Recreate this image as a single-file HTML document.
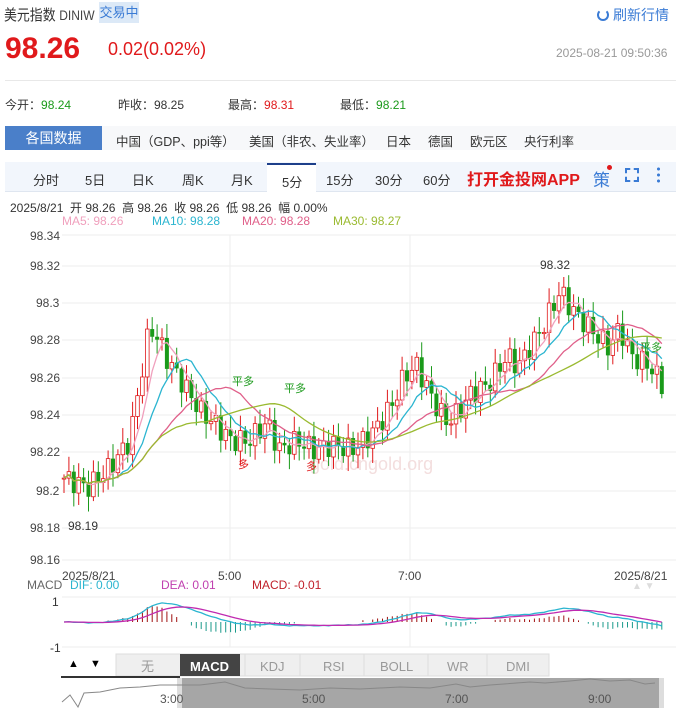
<!DOCTYPE html>
<html><head><meta charset="utf-8">
<style>
*{margin:0;padding:0;box-sizing:border-box}
body{width:676px;height:708px;overflow:hidden;background:#fff;font-family:"Liberation Sans","Noto Sans CJK SC",sans-serif;color:#333;position:relative}
.a{position:absolute;white-space:nowrap}
.g{color:#1a9a1a}.r{color:#e0191b}
</style></head><body>
<div class="a" style="left:4px;top:4px;font-size:15px;color:#333;transform:scaleX(0.86);transform-origin:0 0">美元指数 <span style="font-size:14px;color:#444">DINIW</span></div>
<div class="a" style="left:99px;top:2px;width:40px;height:21px;background:#dce9f7;color:#3a7bd5;font-size:13px;line-height:21px;text-align:center">交易中</div>
<div class="a" style="left:597px;top:5px;font-size:14px;color:#3a7bd5"><span style="display:inline-block;width:12px;height:12px;border:2.5px solid #3a7bd5;border-radius:50%;border-top-color:transparent;vertical-align:-1px;margin-right:4px"></span>刷新行情</div>
<div class="a r" style="left:5px;top:32px;font-size:30px;font-weight:bold">98.26</div>
<div class="a r" style="left:108px;top:39px;font-size:18px">0.02(0.02%)</div>
<div class="a" style="left:556px;top:46px;font-size:12px;color:#999">2025-08-21 09:50:36</div>
<div class="a" style="left:5px;top:80px;width:671px;height:1px;background:#e8e8e8"></div>
<div class="a" style="left:5px;top:96px;font-size:12px">今开：<span class="g">98.24</span></div>
<div class="a" style="left:118px;top:96px;font-size:12px">昨收：98.25</div>
<div class="a" style="left:228px;top:96px;font-size:12px">最高：<span class="r">98.31</span></div>
<div class="a" style="left:340px;top:96px;font-size:12px">最低：<span class="g">98.21</span></div>
<div class="a" style="left:5px;top:126px;width:97px;height:24px;background:#4a7fc9;color:#fff;font-size:14px;line-height:24px;text-align:center">各国数据</div>
<div class="a" style="left:102px;top:126px;width:574px;height:24px;background:#f7f8fa"></div>
<div class="a" style="left:116px;top:131px;font-size:12.5px;color:#333">中国（GDP、ppi等）</div>
<div class="a" style="left:249px;top:131px;font-size:12.5px">美国（非农、失业率）</div>
<div class="a" style="left:386px;top:131px;font-size:12.5px">日本</div>
<div class="a" style="left:428px;top:131px;font-size:12.5px">德国</div>
<div class="a" style="left:470px;top:131px;font-size:12.5px">欧元区</div>
<div class="a" style="left:524px;top:131px;font-size:12.5px">央行利率</div>
<div class="a" style="left:5px;top:162px;width:671px;height:30px;background:#f2f6fc;border-bottom:1px solid #dfe6f0"></div>
<div class="a" style="left:267px;top:163px;width:49px;height:30px;background:#fff;border-top:2px solid #1d3f8a"></div>
<div class="a" style="left:33px;top:170px;font-size:13px">分时</div>
<div class="a" style="left:85px;top:170px;font-size:13px">5日</div>
<div class="a" style="left:132px;top:170px;font-size:13px">日K</div>
<div class="a" style="left:182px;top:170px;font-size:13px">周K</div>
<div class="a" style="left:231px;top:170px;font-size:13px">月K</div>
<div class="a" style="left:282px;top:172px;font-size:13px">5分</div>
<div class="a" style="left:326px;top:170px;font-size:13px">15分</div>
<div class="a" style="left:375px;top:170px;font-size:13px">30分</div>
<div class="a" style="left:423px;top:170px;font-size:13px">60分</div>
<div class="a r" style="left:467px;top:166px;font-size:16px;font-weight:bold">打开金投网APP</div>
<div class="a" style="left:593px;top:166px;font-size:17px;color:#3a7bd5">策</div>
<div class="a" style="left:607px;top:165px;width:5px;height:5px;border-radius:50%;background:#e0191b"></div>
<div class="a" style="left:625px;top:168px;width:14px;height:14px;border:2px dashed #3a7bd5;border-width:2px"></div>
<div class="a" style="left:657px;top:166px;width:3px;height:17px;background:radial-gradient(circle,#3a7bd5 1.4px,transparent 1.6px) 0 0/3px 6px"></div>
<div class="a" style="left:10px;top:199px;font-size:12px;color:#333">2025/8/21&nbsp; 开 98.26&nbsp; 高 98.26&nbsp; 收 98.26&nbsp; 低 98.26&nbsp; 幅 0.00%</div>
<div class="a" style="left:62px;top:214px;font-size:12px;color:#f0a0bd">MA5: 98.26</div>
<div class="a" style="left:152px;top:214px;font-size:12px;color:#2bb5d0">MA10: 98.28</div>
<div class="a" style="left:242px;top:214px;font-size:12px;color:#e0608a">MA20: 98.28</div>
<div class="a" style="left:333px;top:214px;font-size:12px;color:#9aba30">MA30: 98.27</div>
<svg class="a" style="left:0;top:225px" width="676" height="483" id="sv" font-family="Liberation Sans,sans-serif" font-size="12">
<g fill="#444">
<text x="30" y="15">98.34</text><text x="30" y="45">98.32</text><text x="36" y="82">98.3</text>
<text x="30" y="119">98.28</text><text x="30" y="157">98.26</text><text x="30" y="194">98.24</text>
<text x="30" y="231">98.22</text><text x="36" y="270">98.2</text><text x="30" y="307">98.18</text><text x="30" y="339">98.16</text>
<text x="62" y="355">2025/8/21</text><text x="218" y="355">5:00</text><text x="398" y="355">7:00</text><text x="614" y="355">2025/8/21</text>
</g>
<g stroke="#eee"><line x1="62" y1="10" x2="676" y2="10"/><line x1="62" y1="41" x2="676" y2="41"/><line x1="62" y1="78" x2="676" y2="78"/><line x1="62" y1="115" x2="676" y2="115"/><line x1="62" y1="153" x2="676" y2="153"/><line x1="62" y1="190" x2="676" y2="190"/><line x1="62" y1="227" x2="676" y2="227"/><line x1="62" y1="266" x2="676" y2="266"/><line x1="62" y1="303" x2="676" y2="303"/><line x1="62" y1="335" x2="676" y2="335"/><line x1="230" y1="10" x2="230" y2="335"/><line x1="410" y1="10" x2="410" y2="335"/><line x1="62" y1="372" x2="676" y2="372"/><line x1="62" y1="422" x2="676" y2="422"/><line x1="230" y1="372" x2="230" y2="422"/><line x1="410" y1="372" x2="410" y2="422"/></g>
<text x="310" y="245" font-size="18" fill="#f3dede">gold.cngold.org</text>
<g id="cd"></g><g id="ma" fill="none" stroke-width="1.3"></g>
<text x="540" y="44" fill="#333">98.32</text><text x="68" y="305" fill="#333">98.19</text>
<text x="232" y="160" font-size="11" fill="#1a9a1a">平多</text><text x="284" y="167" font-size="11" fill="#1a9a1a">平多</text><text x="640" y="126" font-size="11" fill="#1a9a1a">平多</text>
<text x="238" y="243" font-size="11" fill="#e0191b">多</text><text x="306" y="245" font-size="11" fill="#e0191b">多</text>
<g fill="#666"><text x="27" y="364">MACD</text></g>
<text x="70" y="364" fill="#2bb5d0">DIF: 0.00</text><text x="161" y="364" fill="#c040b0">DEA: 0.01</text><text x="252" y="364" fill="#c0202a">MACD: -0.01</text>
<text x="632" y="364" fill="#ddd" font-size="10">▲ ▼</text>
<text x="52" y="381" fill="#333">1</text><text x="50" y="427" fill="#333">-1</text>
<g id="mc"></g>
<rect x="62" y="424" width="52" height="24" fill="#fff"/>
<text x="68" y="442" font-size="11">▲</text><text x="90" y="442" font-size="11">▼</text>
<rect x="116" y="429" width="433" height="22" fill="#efefef" stroke="#ddd"/>
<rect x="180" y="429" width="60" height="22" fill="#444"/>
<g fill="#999" font-size="13"><text x="141" y="446">无</text><text x="260" y="446">KDJ</text><text x="323" y="446">RSI</text><text x="380" y="446">BOLL</text><text x="447" y="446">WR</text><text x="506" y="446">DMI</text></g>
<text x="190" y="446" fill="#fff" font-size="13" font-weight="bold">MACD</text>
<g stroke="#ddd"><line x1="245" y1="429" x2="245" y2="451"/><line x1="300" y1="429" x2="300" y2="451"/><line x1="364" y1="429" x2="364" y2="451"/><line x1="428" y1="429" x2="428" y2="451"/><line x1="487" y1="429" x2="487" y2="451"/></g>
<line x1="61" y1="452" x2="180" y2="452" stroke="#333" stroke-width="2"/>
<rect x="180" y="453" width="480" height="30" fill="#a6a6a6"/>
<rect x="177" y="453" width="5" height="30" fill="#ddd"/><rect x="659" y="453" width="5" height="30" fill="#ddd"/>
<polyline fill="none" stroke="#888" points="62,477 70,470 78,482 84,468 100,467 120,463 140,462 160,460 180,460 200,460 225,457 245,463 270,464 300,465 330,463 360,464 400,462 430,463 456,459 470,462 490,460 530,457 545,458 570,456 590,454 610,456 630,455 645,459 655,458"/>
<g fill="#555" font-size="12"><text x="160" y="478">3:00</text><text x="302" y="478">5:00</text><text x="445" y="478">7:00</text><text x="588" y="478">9:00</text></g>
</svg>
<script>
(function(){
function Y(p){return 10+(98.34-p)*1870;}
var key=[[0,98.21],[8,98.205],[15,98.215],[22,98.23],[28,98.285],[30,98.29],[34,98.275],[40,98.26],[46,98.245],[50,98.24],[56,98.23],[62,98.23],[68,98.24],[72,98.225],[78,98.23],[84,98.225],[90,98.228],[96,98.225],[102,98.232],[106,98.24],[110,98.25],[114,98.265],[118,98.27],[124,98.25],[128,98.24],[132,98.245],[136,98.255],[142,98.26],[148,98.275],[152,98.27],[160,98.29],[166,98.31],[170,98.3],[176,98.29],[182,98.28],[186,98.29],[190,98.275],[196,98.27],[200,98.26]];
var N=123,px=[];
for(var i=0;i<N;i++){var t=i/(N-1)*200,k=0;while(k<key.length-2&&key[k+1][0]<t)k++;var a=key[k],b=key[k+1];var f=(t-a[0])/(b[0]-a[0]);px.push(a[1]+(b[1]-a[1])*f+Math.sin(i*2.3)*0.006);}
var cd=document.getElementById('cd'),h='';
for(var i=0;i<N;i++){var x=64+i*4.9,o=i?px[i-1]:px[0],c=px[i],up=c>=o,col=up?'#e0191b':'#1a9a1a';
var hi=Math.max(o,c)+0.002+Math.abs(Math.sin(i*1.7))*0.006,lo=Math.min(o,c)-0.002-Math.abs(Math.cos(i*1.3))*0.006;
h+='<line x1="'+x+'" x2="'+x+'" y1="'+Y(hi)+'" y2="'+Y(lo)+'" stroke="'+col+'"/>';
var y1=Y(Math.max(o,c)),hh=Math.max(1,Y(Math.min(o,c))-y1);
h+=up?'<rect x="'+(x-1.8)+'" y="'+y1+'" width="3.6" height="'+hh+'" fill="#fff" stroke="'+col+'" stroke-width="0.8"/>':'<rect x="'+(x-2)+'" y="'+y1+'" width="4" height="'+hh+'" fill="'+col+'"/>';}
cd.innerHTML=h;
var ma=document.getElementById('ma'),m='',cols={5:'#f0a0bd',10:'#2bb5d0',20:'#e0608a',30:'#9aba30'};
[5,10,20,30].forEach(function(n){var pts=[];for(var i=0;i<N;i++){var s=0,c=0;for(var j=Math.max(0,i-n+1);j<=i;j++){s+=px[j];c++;}pts.push((64+i*4.9).toFixed(1)+','+Y(s/c).toFixed(1));}m+='<polyline stroke="'+cols[n]+'" points="'+pts.join(' ')+'"/>';});
ma.innerHTML=m;
var mc=document.getElementById('mc'),q='',e12=px[0],e26=px[0],dea=0,d1=[],d2=[];
for(var i=0;i<N;i++){e12=e12+(px[i]-e12)*2/13;e26=e26+(px[i]-e26)*2/27;var dif=(e12-e26)*55;dea=dea+(dif-dea)*0.2;var x=64+i*4.9;
d1.push(x.toFixed(1)+','+(397-dif*18).toFixed(1));d2.push(x.toFixed(1)+','+(397-dea*18).toFixed(1));
var hv=(dif-dea)*2*18;if(Math.abs(hv)>1.5)q+='<line x1="'+x+'" x2="'+x+'" y1="397" y2="'+(397-hv)+'" stroke="'+(hv>0?'#a01010':'#1a9a8a')+'"/>';}
q+='<polyline fill="none" stroke="#2bb5d0" stroke-width="1.3" points="'+d1.join(' ')+'"/><polyline fill="none" stroke="#c02ab0" stroke-width="1.3" points="'+d2.join(' ')+'"/>';
mc.innerHTML=q;
})();
</script>
</body></html>
